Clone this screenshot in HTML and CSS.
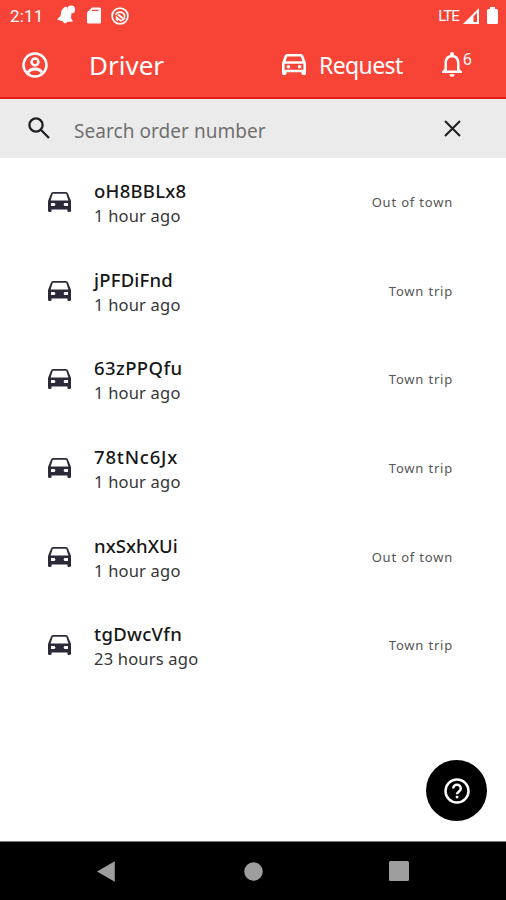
FILE: index.html
```html
<!DOCTYPE html>
<html lang="en">
<head>
<meta charset="utf-8">
<title>Driver</title>
<link rel="stylesheet" href="styles.css">
</head>
<body>
<svg class="defs" width="0" height="0">
  <symbol id="car" viewBox="0 0 23 20"><path fill-rule="evenodd" d="M5 0h13q1.500 0 2 1.500L23 9v9.500q0 1.500-1.500 1.500h-.8q-1.300 0-1.300-1.500v-1H3.600v1Q3.600 20 2.300 20h-.8Q0 20 0 18.500V9l3-7.500Q3.500 0 5 0zM4.800 1.700 2.600 8.500h17.800l-2.200-6.800z"/><path fill="#fff" d="M3 11h3.500l1 1.500-1 1.500H3zM20 11h-3.500l-1 1.500 1 1.500H20z"/></symbol>
</svg>
<div class="screen">
  <header class="header">
    <div class="status">
      <span class="clock">2:11</span>
      <svg class="s-bell" width="20" height="20" viewBox="0 0 20 20"><path d="M8 2.500c1-1 3-1 3.500 0C11 6 13 8 15.500 8.500L15 13l2 3.500-6 .5c-.5 1.800-3.500 1.800-4-.5L1 14.500l3.500-3.500 1-5.500z"/><circle cx="15.200" cy="4.500" r="3.900"/></svg>
      <svg class="s-card" width="14" height="17" viewBox="0 0 14 17"><path fill-rule="evenodd" d="M5 .5h7.500q1.500 0 1.500 1.500v13q0 1.500-1.500 1.500h-11Q0 16.500 0 15V5.500zM5 2.800v1.300h6.500V2.800z"/></svg>
      <svg class="s-round" width="18" height="18" viewBox="0 0 18 18"><g fill="none" stroke="#fff"><circle cx="9" cy="9" r="7.900" stroke-width="1.800"/><path d="M4.500 8c2-3.800 7-3.800 9 0v3c-1 2-2 2.700-4 2.700L4.800 9.500M5 12l2 1.500" stroke-width="1.600"/><path d="M7 7.500l5 4" stroke-width="2"/></g></svg>
      <span class="lte">LTE</span>
      <svg class="s-signal" width="16" height="16" viewBox="0 0 16 16"><path fill-rule="evenodd" d="M16 0v16H0zM14 4.800 10.500 8.300V14H14z"/></svg>
      <svg class="s-battery" width="11" height="17" viewBox="0 0 11 17"><path d="M3 0h5v2h1.500Q11 2 11 3.500v12q0 1.500-1.500 1.500h-8Q0 17 0 15.500v-12Q0 2 1.500 2H3z"/></svg>
    </div>
    <div class="toolbar">
      <svg class="account" width="26" height="26" viewBox="0 0 26 26"><g fill="none" stroke="#fff" stroke-width="2.500"><circle cx="13" cy="13" r="11.500"/><circle cx="13" cy="10" r="3.400"/><path d="M6 20.500c3-4.700 11-4.700 14 0" stroke-width="3"/></g></svg>
      <h1 class="title">Driver</h1>
      <svg class="head-car" width="24" height="21" viewBox="0 0 24 21"><path fill-rule="evenodd" d="M5 0h14q1.700 0 2.200 1.500L24 9v10.500q0 1.500-1.500 1.500H21q-1.500 0-1.500-1.500v-1.300h-15v1.300Q4.500 21 3 21H1.500Q0 21 0 19.500V9l2.800-7.500Q3.300 0 5 0zM5.200 2.500 3.600 7.300h16.800l-1.600-4.800zM2.600 9.700v6h18.800v-6z"/><circle cx="6.400" cy="12.700" r="1.800"/><circle cx="17.600" cy="12.700" r="1.800"/></svg>
      <span class="request">Request</span>
      <svg class="bell" width="20" height="25" viewBox="0 0 20 25"><path fill-rule="evenodd" d="M8.200 3V1.800q0-1.800 1.800-1.800t1.800 1.800V3c4 .9 5.700 4 5.700 8v6l2.500 2.500V21H0v-1.500L2.500 17v-6c0-4 1.700-7.100 5.700-8zM5 18.500h10V11c0-3.500-1.800-5.500-5-5.500S5 7.500 5 11z"/><path d="M7.500 22.200h5q0 2.500-2.500 2.500t-2.500-2.500z"/></svg>
      <span class="count">6</span>
    </div>
  </header>
  <div class="search">
    <svg class="lens" width="22" height="22" viewBox="0 0 22 22"><g fill="none" stroke="#202024" stroke-width="2.300"><circle cx="8" cy="8" r="6.600"/><path d="M12.800 12.800 21 21"/></g></svg>
    <span class="hint">Search order number</span>
    <svg class="close" width="17" height="17" viewBox="0 0 17 17"><path d="M1 1l15 15M16 1 1 16" stroke="#202024" stroke-width="2.100"/></svg>
  </div>
  <main class="list">
    <div class="row"><svg class="car"><use href="#car"/></svg><div class="order"><div class="code c1">oH8BBLx8</div><div class="time">1 hour ago</div></div><div class="trip">Out of town</div></div>
    <div class="row"><svg class="car"><use href="#car"/></svg><div class="order"><div class="code c2">jPFDiFnd</div><div class="time">1 hour ago</div></div><div class="trip">Town trip</div></div>
    <div class="row"><svg class="car"><use href="#car"/></svg><div class="order"><div class="code c3">63zPPQfu</div><div class="time">1 hour ago</div></div><div class="trip">Town trip</div></div>
    <div class="row"><svg class="car"><use href="#car"/></svg><div class="order"><div class="code c4">78tNc6Jx</div><div class="time">1 hour ago</div></div><div class="trip">Town trip</div></div>
    <div class="row"><svg class="car"><use href="#car"/></svg><div class="order"><div class="code c5">nxSxhXUi</div><div class="time">1 hour ago</div></div><div class="trip">Out of town</div></div>
    <div class="row"><svg class="car"><use href="#car"/></svg><div class="order"><div class="code c6">tgDwcVfn</div><div class="time">23 hours ago</div></div><div class="trip">Town trip</div></div>
  </main>
  <div class="fab"><svg width="26" height="26" viewBox="0 0 26 26"><g fill="none" stroke="#fff" stroke-width="2.500"><circle cx="13" cy="13" r="11.500"/><path d="M9.200 10.500c0-5 7.600-5 7.600 0 0 2.800-3.800 3-3.800 5.800"/></g><rect x="11.800" y="17.800" width="2.500" height="2.500" fill="#fff"/></svg></div>
  <nav class="nav">
    <svg width="18" height="21" viewBox="0 0 18 21"><path d="M17.800.3v20.400L0 10.500z"/></svg>
    <svg class="home" width="19" height="19" viewBox="0 0 19 19"><circle cx="9.500" cy="9.500" r="9.300"/></svg>
    <svg width="20" height="20" viewBox="0 0 20 20"><rect width="20" height="20" rx="1.500"/></svg>
  </nav>
</div>
</body>
</html>
```

FILE: styles.css
```css
* { box-sizing: border-box; }
body { margin: 0; font-family: "Noto Sans", sans-serif; background: #fff; }
svg { display: block; flex: none; }
.defs { position: absolute; }
.screen { position: relative; width: 506px; height: 900px; display: flex; flex-direction: column; overflow: hidden; white-space: nowrap; }

.header { height: 99px; background: #f84437; border-bottom: 2px solid #e41c12; color: #fff; fill: #fff; }
.status { height: 32px; display: flex; align-items: center; padding: 0 8px 0 10px; font-family: Roboto, sans-serif; }
.clock { width: 46px; font-size: 17px; letter-spacing: 0.2px; }
.s-bell { margin-top: -2px; }
.s-card { margin: -2px 0 0 11px; }
.s-round { margin: -1px 0 0 10px; }
.lte { margin-left: auto; font-size: 15px; letter-spacing: -0.9px; }
.s-signal { margin-left: 4px; }
.s-battery { margin: -1px 0 0 8px; }
.toolbar { height: 65px; display: flex; align-items: center; padding-left: 22px; }
.title { width: 192px; margin: 0 0 0 41px; font-size: 26px; font-weight: 400; line-height: 36px; }
.head-car { margin-left: 1px; }
.request { width: 111px; margin-left: 13px; font-size: 23px; letter-spacing: -0.6px; line-height: 32px; }
.bell { margin-left: 12px; }
.count { align-self: flex-start; margin: 17px 0 0 1px; font-size: 15.5px; line-height: 20px; }

.search { height: 59px; background: #ebebeb; display: flex; align-items: center; padding: 0 45px 0 28px; }
.lens { margin-top: -1px; }
.hint { margin: 5px auto 0 24px; color: #707070; font-size: 19px; letter-spacing: 0.05px; }

.list { flex: 1; }
.row { height: 88.6px; display: flex; align-items: center; padding: 0 53px 0 48px; }
.car { width: 23px; height: 20px; fill: #2c2a38; }
.order { margin: 2px 0 0 23px; flex: 1; }
.code { color: #171717; font-size: 18.5px; font-weight: 500; line-height: 25px; }
.c1 { letter-spacing: 0.25px; }
.c2 { letter-spacing: 0.2px; }
.c3 { letter-spacing: 0.4px; }
.c4 { letter-spacing: 0.8px; }
.c5 { letter-spacing: 0.05px; }
.c6 { letter-spacing: 0.3px; }
.time { color: #363636; font-size: 16.5px; letter-spacing: 0.2px; line-height: 25px; }
.trip { color: #555; font-size: 13px; letter-spacing: 0.8px; }

.fab { position: absolute; left: 426px; top: 760px; width: 61px; height: 61px; border-radius: 50%; background: #000; display: flex; align-items: center; justify-content: center; }
.nav { height: 59px; background: #000; border-top: 1px solid #777; display: flex; align-items: center; justify-content: space-between; padding: 0 97px; fill: #9e9e9e; }
.home { margin-left: 3px; }
```
